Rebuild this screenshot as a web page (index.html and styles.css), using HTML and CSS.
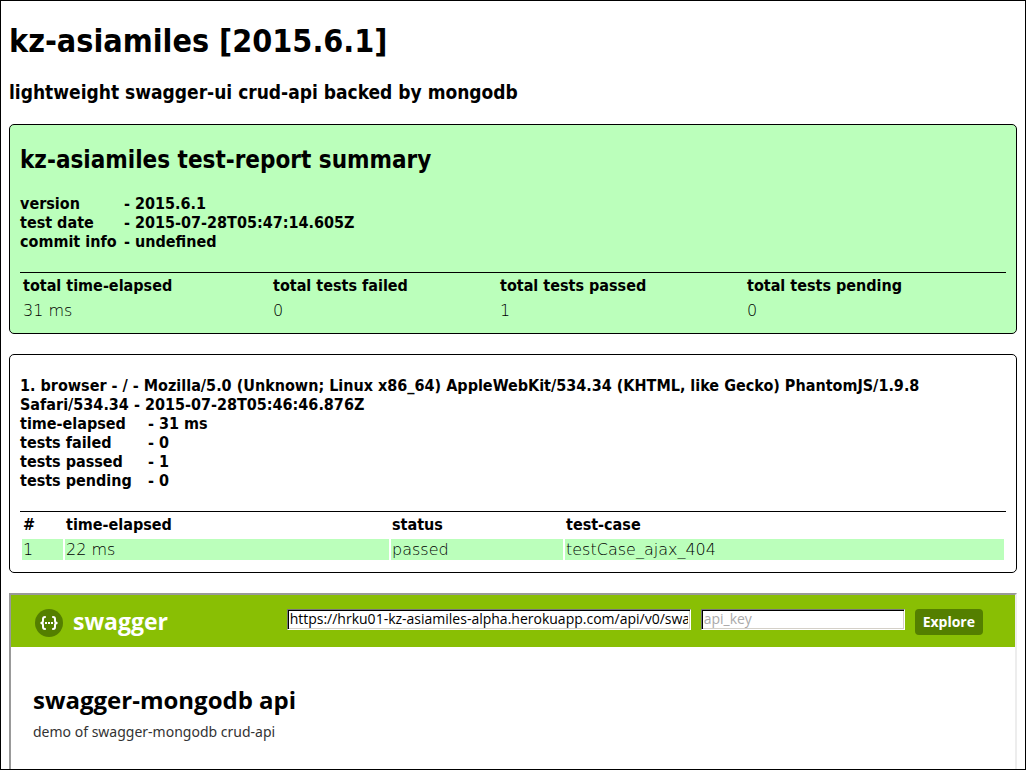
FILE: index.html
```html
<!DOCTYPE html>
<html lang="en">
<head>
<meta charset="utf-8">
<title>kz-asiamiles [2015.6.1]</title>
<link rel="stylesheet" href="styles.css">
</head>
<body class="page">
<header class="intro">
  <h1 class="title">kz-asiamiles [2015.6.1]</h1>
  <h3 class="tagline">lightweight swagger-ui crud-api backed by mongodb</h3>
</header>
<main class="content">
  <section class="report report-summary">
    <h2 class="report-title">kz-asiamiles test-report summary</h2>
    <dl class="facts facts-summary">
      <dt>version</dt><dd>- 2015.6.1</dd>
      <dt>test date</dt><dd>- 2015-07-28T05:47:14.605Z</dd>
      <dt>commit info</dt><dd>- undefined</dd>
    </dl>
    <table class="results totals">
      <colgroup><col class="total-time"><col class="total-failed"><col class="total-passed"><col></colgroup>
      <thead><tr><th>total time-elapsed</th><th>total tests failed</th><th>total tests passed</th><th>total tests pending</th></tr></thead>
      <tbody><tr><td>31 ms</td><td>0</td><td>1</td><td>0</td></tr></tbody>
    </table>
  </section>
  <section class="report report-platform">
    <h4 class="platform">1. browser - / - Mozilla/5.0 (Unknown; Linux x86_64) AppleWebKit/534.34 (KHTML, like Gecko) PhantomJS/1.9.8 Safari/534.34 - 2015-07-28T05:46:46.876Z</h4>
    <dl class="facts facts-platform">
      <dt>time-elapsed</dt><dd>- 31 ms</dd>
      <dt>tests failed</dt><dd>- 0</dd>
      <dt>tests passed</dt><dd>- 1</dd>
      <dt>tests pending</dt><dd>- 0</dd>
    </dl>
    <table class="results cases">
      <colgroup><col class="case-number"><col class="case-time"><col class="case-status"><col></colgroup>
      <thead><tr><th>#</th><th>time-elapsed</th><th>status</th><th>test-case</th></tr></thead>
      <tbody><tr><td>1</td><td>22 ms</td><td>passed</td><td>testCase_ajax_404</td></tr></tbody>
    </table>
  </section>
  <section class="swagger">
    <div class="bar">
      <a class="brand" href="#">
        <svg class="logo" viewBox="0 0 28 28" aria-hidden="true">
          <circle cx="14" cy="14" r="14" fill="#547f00"/>
          <path d="M10.800 8H10Q8 8 8 10V12Q8 14 5.500 14Q8 14 8 16V18Q8 20 10 20H10.800M17.200 8H18Q20 8 20 10V12Q20 14 22.500 14Q20 14 20 16V18Q20 20 18 20H17.200" fill="none" stroke="#fff" stroke-width="2"/>
          <path d="M10 13h2v2h-2zM13 13h2v2h-2zM16 13h2v2h-2z" fill="#fff"/>
        </svg>
        <span>swagger</span>
      </a>
      <form class="api-form">
        <input class="field field-url" type="text" aria-label="API URL" value="https://hrku01-kz-asiamiles-alpha.herokuapp.com/api/v0/swagger.json">
        <input class="field field-key" type="text" aria-label="API key" placeholder="api_key">
        <button class="explore" type="button">Explore</button>
      </form>
    </div>
    <div class="api-info">
      <h2 class="api-title">swagger-mongodb api</h2>
      <p class="api-text">demo of swagger-mongodb crud-api</p>
    </div>
  </section>
</main>
</body>
</html>
```
FILE: styles.css
```css
* {
  box-sizing: border-box;
}

.page {
  display: flex;
  flex-direction: column;
  height: 100vh;
  margin: 0;
  padding: 21px 8px 0;
  overflow: hidden;
  border: 1px solid #000;
  background: #fff;
  color: #000;
  font: 16px/19px "DejaVu Sans Condensed", "DejaVu Sans", sans-serif;
}

.title {
  margin: 0;
  font-size: 32px;
  line-height: 38px;
}

.tagline {
  margin: 21px 0 20px;
  font-size: 19px;
  line-height: 23px;
}

.content {
  display: flex;
  flex: 1;
  flex-direction: column;
  gap: 20px;
}

.report {
  padding: 21px 10px 10px;
  border: 1px solid #000;
  border-radius: 5px;
}

.report-summary {
  background: #bfb;
}

.report-title {
  margin: 0 0 20px;
  font-size: 24px;
  line-height: 28px;
}

.platform {
  margin: 0;
  font-size: 16px;
}

.facts {
  display: grid;
  margin: 0 0 21px;
  font-weight: bold;
}

.facts-summary {
  grid-template-columns: 104px 1fr;
}

.facts-platform {
  grid-template-columns: 128px 1fr;
}

.facts dd {
  margin: 0;
}

.results {
  width: 100%;
  table-layout: fixed;
  border-top: 1px solid #000;
  border-collapse: separate;
  border-spacing: 2px;
  text-align: left;
}

.results th,
.results td {
  padding: 1px;
  line-height: 21px;
}

.results th {
  padding: 0 1px 2px;
}

.results td {
  font-family: "DejaVu Sans", sans-serif;
  font-weight: 200;
  line-height: 19px;
}

.cases td {
  background: #bfb;
}

.total-time {
  width: 248px;
}

.total-failed {
  width: 225px;
}

.total-passed {
  width: 245px;
}

.case-number {
  width: 41px;
}

.case-time {
  width: 324px;
}

.case-status {
  width: 172px;
}

.swagger {
  flex: 1;
  border: 2px solid #999;
  border-right-color: #ededed;
  border-bottom: 0;
  font-family: "Open Sans", sans-serif;
}

.bar {
  display: flex;
  align-items: flex-start;
  justify-content: space-between;
  padding: 14px 32px 10px 24px;
  background: #89bf04;
}

.brand {
  display: flex;
  align-items: flex-start;
  gap: 10px;
  color: #fff;
  font-size: 23px;
  font-weight: bold;
  line-height: 25px;
  text-decoration: none;
}

.logo {
  width: 28px;
  height: 28px;
}

.api-form {
  display: flex;
  align-items: flex-start;
  gap: 10px;
}

.field {
  height: 21px;
  padding: 0 2px 2px;
  border: 1px solid;
  border-color: #777 #fff #fff #777;
  background: #fff;
  box-shadow: inset 1px 1px #000, inset -1px -1px #d4d0c8;
  color: #000;
  font: 14px/17px "Open Sans", sans-serif;
}

.field::placeholder {
  color: #aaa;
}

.field-url {
  width: 404px;
}

.field-key {
  width: 204px;
}

.explore {
  height: 26px;
  padding: 0 8px;
  border: 0;
  border-radius: 4px;
  background: #547f00;
  color: #fff;
  font: bold 14px/26px "Open Sans", sans-serif;
}

.api-info {
  padding: 36px 22px;
}

.api-title {
  margin: 0;
  font-size: 24px;
  line-height: 34px;
}

.api-text {
  margin: 5px 0 0;
  color: #333;
  font: 14px/20px "Noto Sans", sans-serif;
}
```
